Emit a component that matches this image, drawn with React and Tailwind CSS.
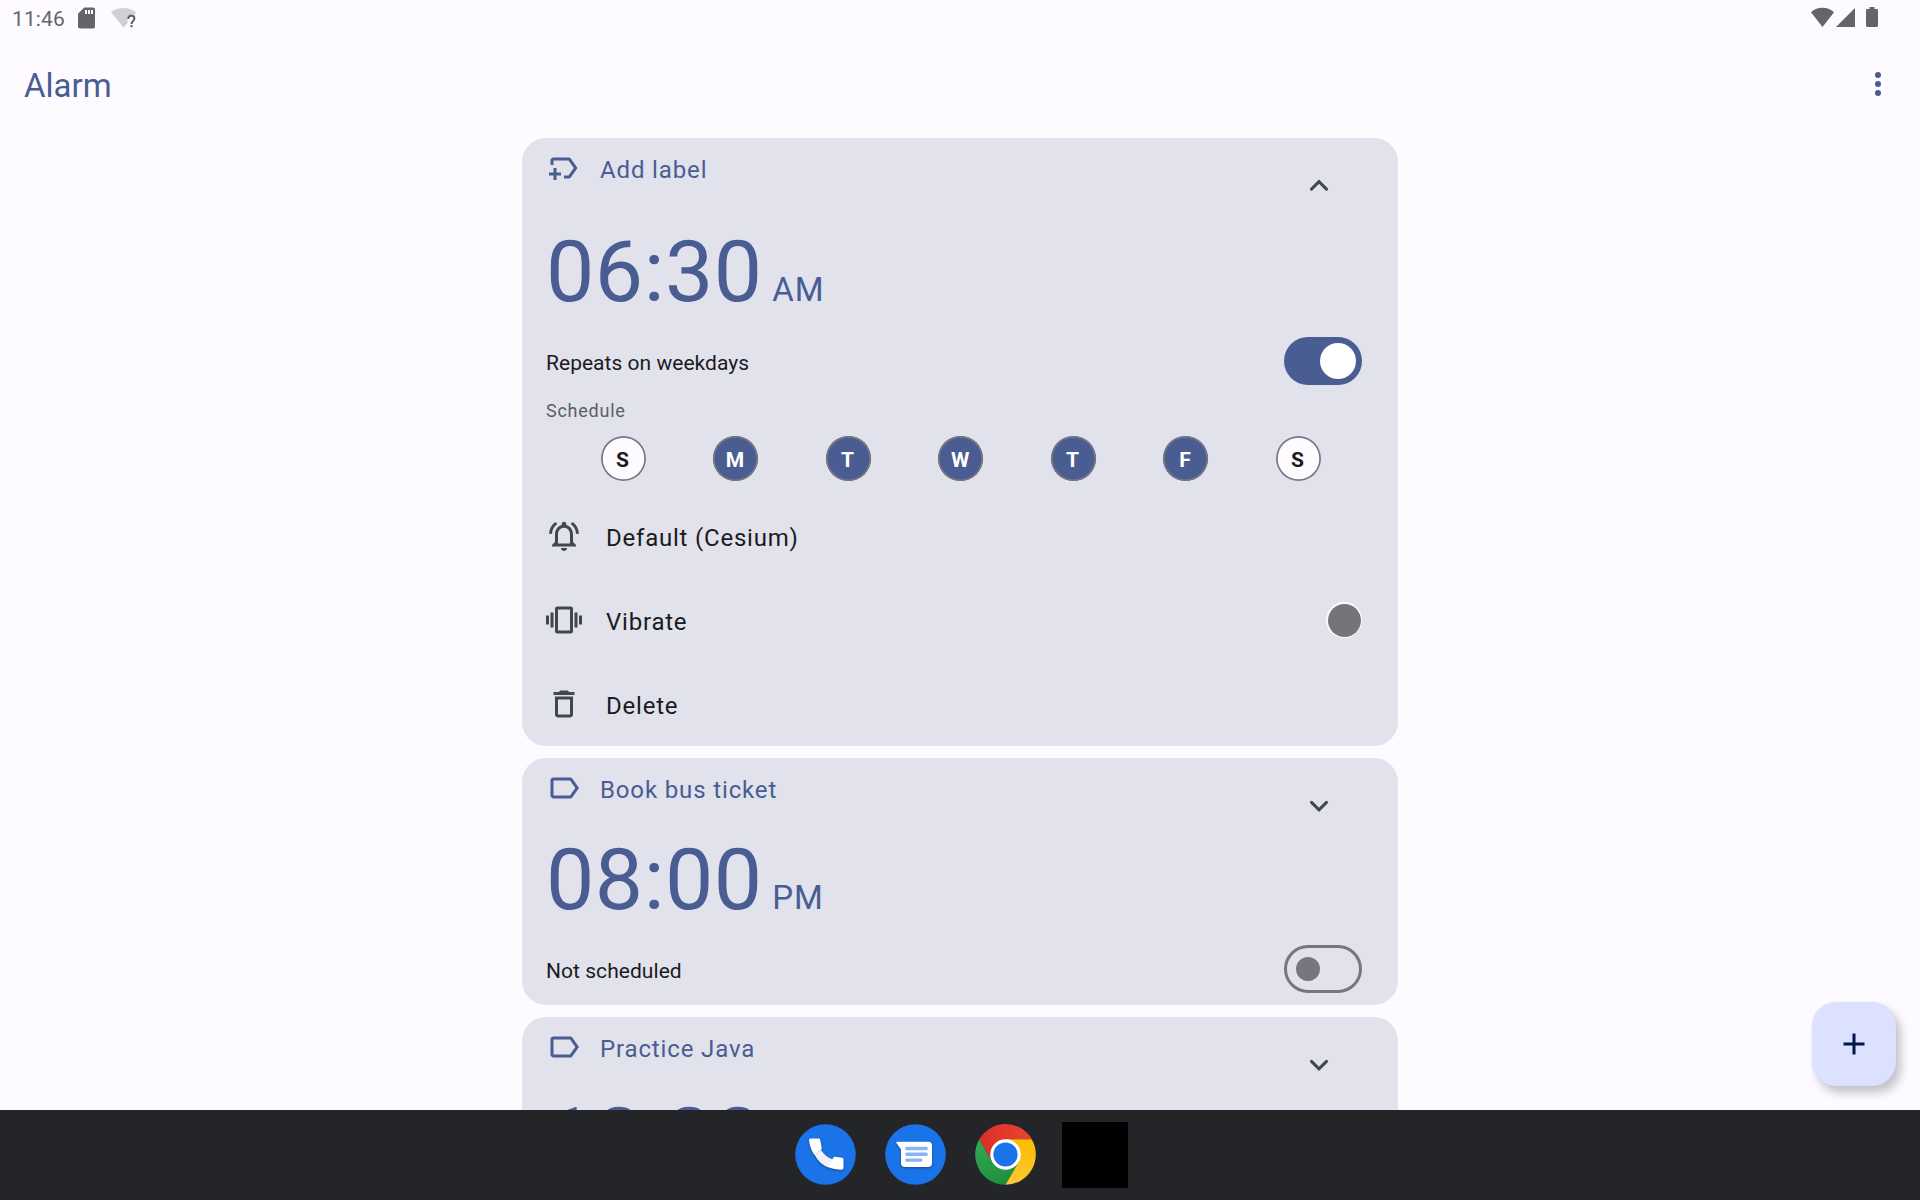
import React from "react";
import { MdLabelOutline, MdOutlineNewLabel, MdOutlineNotificationsActive, MdVibration, MdOutlineDelete, MdAdd } from "react-icons/md";

function Chevron({ up }) {
  return (
    <svg viewBox="0 0 24 24" className="size-9 shrink-0 text-[#44464f]" fill="none" stroke="currentColor" strokeWidth="2" strokeLinecap="round">
      <path d={up ? "M7 14.100 12 9.100l5 5" : "M7 9.600l5 5 5-5"} />
    </svg>
  );
}

function Switch({ on }) {
  return on ? (
    <div className="flex h-12 w-[78px] items-center justify-end rounded-full bg-[#495d92] p-1.5">
      <div className="size-9 rounded-full bg-white" />
    </div>
  ) : (
    <div className="flex h-12 w-[78px] items-center rounded-full border-3 border-[#767680] pl-[9px]">
      <div className="size-6 rounded-full bg-[#767680]" />
    </div>
  );
}

function CardHeader({ label, icon: Icon, open }) {
  return (
    <div className="flex h-[66px] items-start">
      <Icon className="mt-3 size-9 text-[#495d92]" />
      <div className="mt-4 ml-[18px] flex-1 text-[24px] leading-8 tracking-[0.86px] text-[#495d92]">{label}</div>
      <div className="mt-[30px] mr-[37px]">
        <Chevron up={open} />
      </div>
    </div>
  );
}

function Time({ time, period }) {
  return (
    <div className="flex h-25 items-baseline text-[#495d92]">
      <span className="text-[86px] leading-25 tracking-[0.5px]">{time}</span>
      <span className="ml-[9.500px] text-[33px] leading-none tracking-[1px]">{period}</span>
    </div>
  );
}

const days = [
  ["S", false],
  ["M", true],
  ["T", true],
  ["W", true],
  ["T", true],
  ["F", true],
  ["S", false],
];

function Row({ icon: Icon, children, right }) {
  return (
    <div className="flex h-21 items-center">
      <Icon className="size-9 text-[#44464f]" />
      <span className="relative top-[2px] ml-6 flex-1 text-[24px] leading-8 tracking-[0.78px]">{children}</span>
      {right}
    </div>
  );
}

function StatusBar() {
  return (
    <header className="flex h-9 items-start justify-between pl-3 pr-[42px] text-[#666469]">
      <div className="flex items-start">
        <span className="mt-[3px] w-[66px] text-[21px] leading-8 tracking-[0.1px]">11:46</span>
        <svg className="mt-[7px] h-[22px] w-[17px]" viewBox="0 0 17 22" fill="currentColor">
          <path fillRule="evenodd" d="M6.3.4H15a2 2 0 0 1 2 2v17a2 2 0 0 1-2 2H2a2 2 0 0 1-2-2V6.7zM7 3v4h2V3zm3 0v4h2V3zm3 0v4h2V3z" />
        </svg>
        <svg className="mt-[7px] ml-4 h-[22px] w-[26px]" viewBox="0 0 26 22">
          <path d="M0 5.2C3.7 2.3 8 1 12.500 1S21.300 2.300 25 5.200L23.500 7.500C20.500 6.500 16.500 8 16 12l1 3.500L12.500 20.700z" fill="#d2d0d4" />
          <path d="M17.200 12c0-2.200 1.200-3.400 3.100-3.400s3.100 1.200 3.100 2.900c0 2.400-2.900 2.600-2.900 5.400M20.500 18v2.300" fill="none" stroke="#666469" strokeWidth="2.100" />
        </svg>
      </div>
      <div className="mt-[7px] flex">
        <svg className="h-[20px] w-[23px]" viewBox="0 0 23 20" fill="currentColor">
          <path d="M0 5.300C3.200 2.200 7.300.800 11.500.800S19.800 2.200 23 5.300L11.500 20z" />
        </svg>
        <svg className="ml-[2px] h-[20px] w-[19px]" viewBox="0 0 19 20" fill="currentColor">
          <path d="M19 1v19H0z" />
        </svg>
        <svg className="ml-[11px] h-[20px] w-[12px]" viewBox="0 0 12 20" fill="currentColor">
          <path d="M3.500 0h5v2H11a1 1 0 0 1 1 1v15.500A1.500 1.500 0 0 1 10.500 20h-9A1.500 1.500 0 0 1 0 18.500V3a1 1 0 0 1 1-1h2.500z" />
        </svg>
      </div>
    </header>
  );
}

function PhoneIcon() {
  return (
    <svg className="size-[61px] shrink-0" viewBox="0 0 61 61">
      <circle cx="30.500" cy="30.500" r="30.300" fill="#1a73e8" />
      <g className="drop-shadow-[0_1px_1px_rgba(0,0,0,0.35)]">
        <path d="M19.500 30.500C23 37 27 41 33.500 43.500L38 35.500C33 33.500 29 31 26 26z" fill="#f1f1f4" />
        <path d="M15.500 14.500h8.200a1.500 1.500 0 0 1 1.500 1.200l1.500 8.300a2 2 0 0 1-.6 1.800L19.300 31C16.500 26.500 14.500 21.500 14 16.200a1.500 1.500 0 0 1 1.500-1.700z" fill="#fff" />
        <path d="M38.400 33.400a2 2 0 0 1 1.800-.6l6.800.9a1.800 1.800 0 0 1 1.500 1.700v8.300a2 2 0 0 1-2 2c-4.500 0-9-.8-13.500-2.700z" fill="#fff" />
      </g>
    </svg>
  );
}

function MessagesIcon() {
  return (
    <svg className="size-[61px] shrink-0" viewBox="0 0 61 61">
      <circle cx="30.500" cy="30.500" r="30.300" fill="#1a73e8" />
      <path className="drop-shadow-[0_1px_1px_rgba(0,0,0,0.35)]" d="M12 17.700h31a4 4 0 0 1 4 4V39a4 4 0 0 1-4 4H20a4 4 0 0 1-4-4V25.500l-4.600-6.600a.8.8 0 0 1 .6-1.200z" fill="#fff" />
      <path d="M21.800 24.500h19.400M21.800 30.300h19.400M21.800 36.100h14" stroke="#8ab4f8" strokeWidth="3.400" strokeLinecap="round" />
    </svg>
  );
}

function ChromeIcon() {
  return (
    <svg className="size-[61px] shrink-0" viewBox="0 0 61 61">
      <defs>
        <linearGradient id="cr" x1="0" x2="1"><stop stopColor="#d93025" /><stop offset="1" stopColor="#ea4335" /></linearGradient>
        <linearGradient id="cg" x1=".6" y1="1" x2=".1" y2="0"><stop stopColor="#1e8e3e" /><stop offset="1" stopColor="#34a853" /></linearGradient>
        <linearGradient id="cy" x1=".4" y1="1" x2=".6" y2="0"><stop stopColor="#fcc934" /><stop offset="1" stopColor="#fbbc04" /></linearGradient>
      </defs>
      <path d="M30.500 30.500V15.250h26.400A30.300 30.300 0 0 0 4.260 15.350L17.300 38.100z" fill="url(#cr)" />
      <path d="M30.500 30.500 17.300 38.100 4.260 15.350A30.300 30.300 0 0 0 30.500 60.800L43.700 38.100z" fill="url(#cg)" />
      <path d="M30.500 15.250h26.200A30.300 30.300 0 0 1 30.500 60.800L43.700 38.100z" fill="url(#cy)" />
      <circle cx="30.500" cy="30.500" r="15.200" fill="#fff" />
      <circle cx="30.500" cy="30.500" r="12.100" fill="#1a73e8" />
    </svg>
  );
}

export default function App() {
  return (
    <div className="flex h-[1200px] w-[1920px] flex-col overflow-hidden bg-[#fdfbff] font-['Roboto',sans-serif] text-[#1b1b1f]">
      <StatusBar />
      <div className="flex h-24 items-start justify-between pl-6 pr-6">
        <h1 className="mt-[30px] text-[33px] leading-10 text-[#495d92]">Alarm</h1>
        <svg className="mt-[30px] size-9 text-[#495d92]" viewBox="0 0 36 36" fill="currentColor">
          <circle cx="18" cy="9" r="3" />
          <circle cx="18" cy="18" r="3" />
          <circle cx="18" cy="27" r="3" />
        </svg>
      </div>
      <main className="relative flex h-[978px] flex-col items-center gap-3 overflow-hidden pt-1.5">
        <section className="h-[608px] w-[876px] shrink-0 rounded-3xl bg-[#e1e2ec] px-6">
          <CardHeader label="Add label" icon={MdOutlineNewLabel} open />
          <div className="mt-[18px]">
            <Time time="06:30" period="AM" />
          </div>
          <div className="mt-[15px] flex h-12 items-center justify-between pr-3">
            <span className="relative top-[2px] text-[21px] leading-8 tracking-[0.03px]">Repeats on weekdays</span>
            <Switch on />
          </div>
          <div className="mt-[14px] h-6 text-[18px] leading-6 tracking-[0.75px] text-[#5c5d66]">Schedule</div>
          <div className="mt-[13px] ml-[54.750px] flex gap-[67.500px]">
            {days.map(([d, on], i) => (
              <div
                key={i}
                className={
                  "flex size-[45px] items-center justify-center rounded-full text-[21px] font-bold leading-none shadow-[inset_0_0_0_1.700px_#767680] " +
                  (on ? "bg-[#495d92] text-white" : "bg-[#fdfbff] text-[#1b1b1f]")
                }
              >
                <span className="relative top-[2px] right-[0.700px]">{d}</span>
              </div>
            ))}
          </div>
          <div className="mt-[13px] pr-3">
            <Row icon={MdOutlineNotificationsActive}>Default (Cesium)</Row>
            <Row
              icon={MdVibration}
              right={
                <div className="flex size-9 items-center justify-center rounded-full bg-[#fdfbff]">
                  <div className="size-[33px] rounded-full bg-[#757478]" />
                </div>
              }
            >
              Vibrate
            </Row>
            <Row icon={MdOutlineDelete}>Delete</Row>
          </div>
        </section>

        <section className="h-[247px] w-[876px] shrink-0 rounded-3xl bg-[#e1e2ec] px-6">
          <CardHeader label="Book bus ticket" icon={MdLabelOutline} />
          <div className="mt-1.5">
            <Time time="08:00" period="PM" />
          </div>
          <div className="mt-[15px] flex h-12 items-center justify-between pr-3">
            <span className="relative top-[2px] text-[21px] leading-8 tracking-[0.05px]">Not scheduled</span>
            <Switch />
          </div>
        </section>

        <section className="h-[247px] w-[876px] shrink-0 rounded-3xl bg-[#e1e2ec] px-6">
          <CardHeader label="Practice Java" icon={MdLabelOutline} />
          <div className="mt-1.5">
            <Time time="10:00" period="AM" />
          </div>
        </section>

        <button className="absolute top-[870px] right-6 flex size-21 items-center justify-center rounded-3xl bg-[#dbe1ff] text-[#00174b] shadow-[5px_7px_10px_rgba(0,0,0,0.22),0_0_3px_rgba(0,0,0,0.05)]">
          <MdAdd className="size-9" />
        </button>
      </main>
      <nav className="flex h-[90px] shrink-0 items-center bg-[#242529] pl-[794.500px]">
        <div className="mb-px flex gap-[29px]">
          <PhoneIcon />
          <MessagesIcon />
          <ChromeIcon />
        </div>
        <div className="ml-[26.500px] size-[66px] bg-black" />
      </nav>
    </div>
  );
}
